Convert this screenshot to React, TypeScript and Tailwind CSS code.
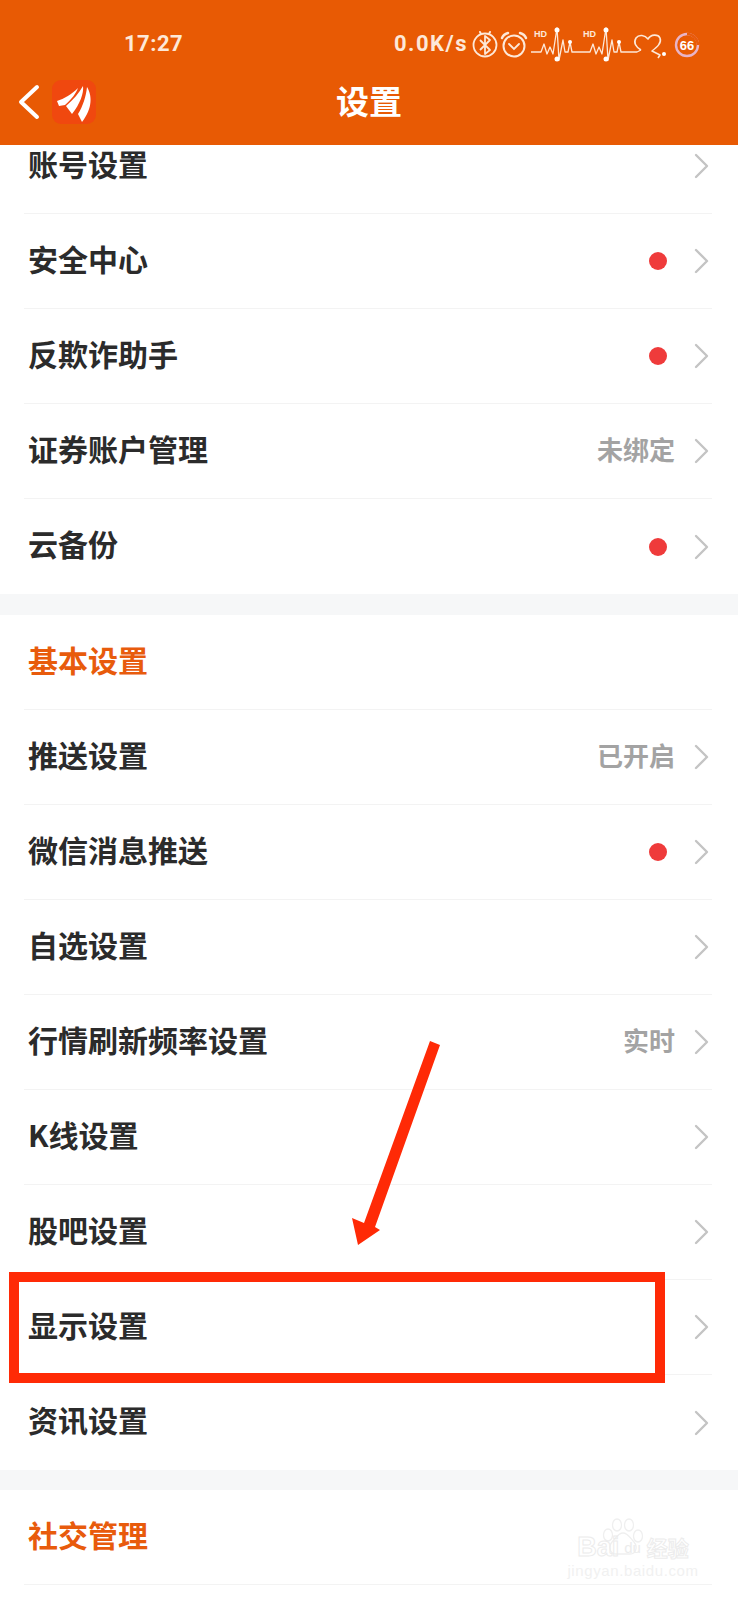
const cjk = '[font-family:"Noto_Sans_CJK_SC","Noto_Sans",sans-serif]'

function Chevron() {
  return (
    <svg width="16" height="26" viewBox="0 0 16 26" fill="none" className="shrink-0">
      <path d="M2 2l11 11L2 24" stroke="#c4c4c4" strokeWidth="2.4" strokeLinecap="round" strokeLinejoin="round" />
    </svg>
  )
}

function SettingRow({ label, value, dot, last }: { label: string; value?: string; dot?: boolean; last?: boolean }) {
  return (
    <div className={`ml-6 mr-[26px] h-[95px] pl-1 pr-[2px] flex items-center ${last ? '' : 'border-b border-[#f3f3f3]'}`}>
      <span className="flex-1 pb-[7px] text-[30px] font-bold text-[#2b2b2b] leading-none">{label}</span>
      {value && <span className="pb-[4px] text-[26px] font-bold text-[#a3a3a3] leading-none mr-[19px]">{value}</span>}
      {dot && <span className="w-[18px] h-[18px] rounded-full bg-[#ef3b3b] mr-[27px]" />}
      <Chevron />
    </div>
  )
}

function SectionTitle({ title }: { title: string }) {
  return (
    <div className="ml-6 mr-[26px] h-[95px] pl-1 flex items-center border-b border-[#f3f3f3]">
      <span className="pb-[7px] text-[30px] font-bold text-[#e85b0c] leading-none">{title}</span>
    </div>
  )
}

function StatusIcons() {
  return (
    <svg width="236" height="40" viewBox="0 0 236 40" fill="none" className="shrink-0">
      {/* bluetooth */}
      <circle cx="16" cy="21" r="11.5" stroke="#fde8d8" strokeWidth="1.8" />
      <path d="M11 16l10 10-5 4V12l5 4-10 10" stroke="#fde8d8" strokeWidth="1.8" strokeLinejoin="round" />
      <path d="M11 8l1 2M21 8l-1 2" stroke="#fde8d8" strokeWidth="2" strokeLinecap="round" />
      {/* alarm */}
      <circle cx="45" cy="22" r="10.5" stroke="#fde8d8" strokeWidth="2" />
      <path d="M40 20l5 5 5-5" stroke="#fde8d8" strokeWidth="1.8" strokeLinecap="round" />
      <path d="M33 14c1-3 3-4 6-5M57 14c-1-3-3-4-6-5" stroke="#fde8d8" strokeWidth="2.4" strokeLinecap="round" />
      {/* heart rate line */}
      <polyline
        points="62,28 72,28 75,20 78,30 81,23 84,30 88,4 90,36 94,16 96,28 99,28 101,18 103,28 121,28 124,20 127,30 130,23 133,30 137,4 139,36 143,16 145,28 148,28 150,18 152,28 168,28 172,26"
        stroke="#fde8d8"
        strokeWidth="1.3"
        strokeLinejoin="round"
      />
      <path d="M172 26c-5-3-8-7-5-12 3-4 9-3 12 1 3-5 10-5 12-1 2 5-3 9-8 13l8 4-2 3" stroke="#fde8d8" strokeWidth="1.6" strokeLinejoin="round" />
      <circle cx="88" cy="6" r="2.5" fill="#fff" />
      <circle cx="88" cy="35" r="2.5" fill="#fff" />
      <circle cx="101" cy="18" r="2" fill="#fff" />
      <circle cx="137" cy="6" r="2.5" fill="#fff" />
      <circle cx="137" cy="35" r="2.5" fill="#fff" />
      <circle cx="150" cy="18" r="2" fill="#fff" />
      <circle cx="195" cy="30" r="2" fill="#fff" />
      <text x="65" y="13" fill="#fde8d8" fontSize="9" fontWeight="700" fontFamily="Liberation Sans, sans-serif">HD</text>
      <text x="114" y="13" fill="#fde8d8" fontSize="9" fontWeight="700" fontFamily="Liberation Sans, sans-serif">HD</text>
      {/* battery ring */}
      <circle cx="218" cy="21" r="11" stroke="#e8b4c8" strokeWidth="2.4" />
      <path d="M218 10a11 11 0 0 1 11 11" stroke="#e85b0c" strokeWidth="2.6" />
      <text x="218" y="26" textAnchor="middle" fill="#ffffff" fontSize="13" fontWeight="700" fontFamily="Liberation Sans, sans-serif">66</text>
    </svg>
  )
}

function Logo() {
  return (
    <div className="w-[44px] h-[44px] rounded-[9px] bg-[#f0480f] flex items-center justify-center">
      <svg width="44" height="44" viewBox="0 0 44 44">
        <path d="M5 21C12 19 20 14 26 8C24 13 20 19 13 25L7 26Z" fill="#fff" />
        <path d="M14 26C21 20 27 13 31 6C32 13 28 24 20 34Z" fill="#fff" />
        <path d="M26 34C31 26 34 16 35 7C40 15 41 28 30 42Z" fill="#fff" />
      </svg>
    </div>
  )
}

function Watermark() {
  return (
    <div className="absolute left-[566px] top-[1518px] w-[134px] flex flex-col items-center pointer-events-none">
      <svg width="44" height="40" viewBox="0 0 44 40" fill="none" stroke="#efefef" strokeWidth="1.3" className="-mb-[24px] ml-[-20px]">
        <ellipse cx="7" cy="17" rx="4.5" ry="6" />
        <ellipse cx="16" cy="7" rx="4.5" ry="6" />
        <ellipse cx="28" cy="7" rx="4.5" ry="6" />
        <ellipse cx="37" cy="18" rx="4.5" ry="6" />
        <path d="M22 15c-5 0-7 5-11 9-4 5-2 12 4 12h14c6 0 8-7 4-12-4-4-6-9-11-9z" />
      </svg>
      <div className="flex items-center gap-[2px] leading-none">
        <span className="text-[27px] font-bold text-transparent [-webkit-text-stroke:1px_#ececec] font-['Liberation_Sans',sans-serif]">Bai</span>
        <span className="text-[15px] text-[#ececec] font-['Liberation_Sans',sans-serif] px-[3px]">du</span>
        <span className="text-[21px] ml-[1px] font-bold text-transparent [-webkit-text-stroke:1px_#ececec]">经验</span>
      </div>
      <span className="text-[15px] tracking-[0.6px] text-[#f1f1f1] leading-none mt-[2px] font-['Liberation_Sans',sans-serif]">jingyan.baidu.com</span>
    </div>
  )
}

export default function App() {
  return (
    <div className={`relative w-[738px] h-[1600px] overflow-hidden bg-white ${cjk}`}>
      {/* orange app bar with the phone status bar in it */}
      <header className="relative z-10 h-[145px] bg-[#e85a04] text-white">
        <div className="h-[76px] pt-[12px] pl-[124px] pr-[33px] flex items-center justify-between">
          <span className="text-[22px] font-bold tracking-[0.5px] text-[#fde8d8] leading-none font-['Roboto',sans-serif]">17:27</span>
          <div className="flex items-center gap-[2px]">
            <span className="text-[22px] font-bold tracking-[1.5px] text-[#fde8d8] leading-none font-['Roboto',sans-serif] mr-[-1px]">0.0K/s</span>
            <StatusIcons />
          </div>
        </div>
        <div className="h-[52px] pl-[18px] flex items-center relative">
          <svg width="22" height="36" viewBox="0 0 22 36" fill="none">
            <path d="M19 3L3 18l16 15" stroke="#fff" strokeWidth="4" strokeLinecap="round" strokeLinejoin="round" />
          </svg>
          <div className="ml-[12px]">
            <Logo />
          </div>
          <span className="absolute left-0 right-0 pb-[4px] text-center text-[33px] font-bold leading-none">设置</span>
        </div>
      </header>

      {/* list is scrolled a little, so the first row runs under the bar */}
      <main className="-mt-[26px]">
        <SettingRow label="账号设置" />
        <SettingRow label="安全中心" dot />
        <SettingRow label="反欺诈助手" dot />
        <SettingRow label="证券账户管理" value="未绑定" />
        <SettingRow label="云备份" dot last />
        <div className="h-[21px] bg-[#f6f7f8]" />
        <SectionTitle title="基本设置" />
        <SettingRow label="推送设置" value="已开启" />
        <SettingRow label="微信消息推送" dot />
        <SettingRow label="自选设置" />
        <SettingRow label="行情刷新频率设置" value="实时" />
        <SettingRow label="K线设置" />
        <SettingRow label="股吧设置" />
        <SettingRow label="显示设置" />
        <SettingRow label="资讯设置" last />
        <div className="h-[20px] bg-[#f6f7f8]" />
        <SectionTitle title="社交管理" />
      </main>

      <Watermark />

      {/* red annotations drawn over the screenshot */}
      <div className="absolute left-[9px] top-[1272px] w-[656px] h-[111px] border-[10px] border-[#ff2a06]" />
      <svg width="738" height="1600" viewBox="0 0 738 1600" className="absolute inset-0 pointer-events-none">
        <polygon points="430,1041 440,1045 375,1227 380,1230 358,1245 352,1218 364,1223" fill="#ff2a06" />
      </svg>
    </div>
  )
}
